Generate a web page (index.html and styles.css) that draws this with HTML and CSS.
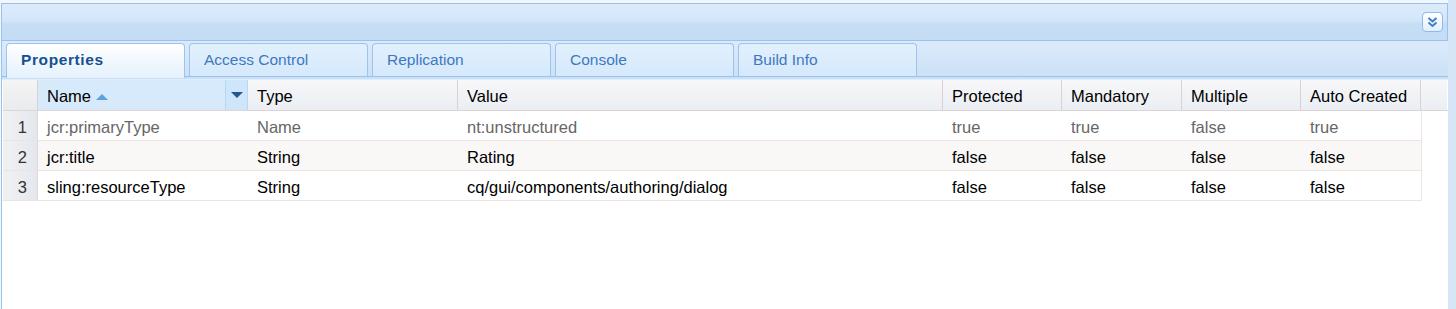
FILE: index.html
```html
<!DOCTYPE html>
<html lang="en">
<head>
  <meta charset="UTF-8">
  <title>CRXDE Lite - Properties</title>
  <link rel="stylesheet" href="styles.css">
</head>
<body>

<div class="app">
  <div class="panel">
    <div class="panel-header">
      <button class="collapse-btn" title="Collapse">
        <svg width="13" height="12" viewBox="0 0 13 12">
          <path d="M2.5 2 L6.5 5.5 L10.5 2" fill="none" stroke="#3b7fc6" stroke-width="2"/>
          <path d="M2.5 6.5 L6.5 10 L10.5 6.5" fill="none" stroke="#3b7fc6" stroke-width="2"/>
        </svg>
      </button>
    </div>

    <div class="tab-strip">
      <div class="tab active">Properties</div>
      <div class="tab">Access Control</div>
      <div class="tab">Replication</div>
      <div class="tab">Console</div>
      <div class="tab">Build Info</div>
    </div>

    <div class="grid">
      <div class="grid-head">
        <div class="hcell numberer"></div>
        <div class="hcell sorted">
          <span>Name</span>
          <span class="sort-arrow"></span>
          <span class="trigger"><span class="trigger-arrow"></span></span>
        </div>
        <div class="hcell">Type</div>
        <div class="hcell">Value</div>
        <div class="hcell">Protected</div>
        <div class="hcell">Mandatory</div>
        <div class="hcell">Multiple</div>
        <div class="hcell">Auto Created</div>
        <div class="hcell filler"></div>
      </div>

      <div class="grid-row readonly">
        <div class="cell numberer">1</div>
        <div class="cell">jcr:primaryType</div>
        <div class="cell">Name</div>
        <div class="cell">nt:unstructured</div>
        <div class="cell">true</div>
        <div class="cell">true</div>
        <div class="cell">false</div>
        <div class="cell">true</div>
      </div>

      <div class="grid-row alt">
        <div class="cell numberer">2</div>
        <div class="cell">jcr:title</div>
        <div class="cell">String</div>
        <div class="cell">Rating</div>
        <div class="cell">false</div>
        <div class="cell">false</div>
        <div class="cell">false</div>
        <div class="cell">false</div>
      </div>

      <div class="grid-row">
        <div class="cell numberer">3</div>
        <div class="cell">sling:resourceType</div>
        <div class="cell">String</div>
        <div class="cell">cq/gui/components/authoring/dialog</div>
        <div class="cell">false</div>
        <div class="cell">false</div>
        <div class="cell">false</div>
        <div class="cell">false</div>
      </div>
    </div>
  </div>
  <div class="side-strip"></div>
</div>

</body>
</html>
```

FILE: styles.css
```css
* {
  margin: 0;
  padding: 0;
  box-sizing: border-box;
}

html, body {
  height: 100%;
  background: #ffffff;
  font-family: "Liberation Sans", Arial, sans-serif;
  font-size: 16.5px;
  color: #000;
  overflow: hidden;
}

.app {
  display: flex;
  height: 309px;
  background: #f2f7fd;
}

.panel {
  flex: 1;
  margin-top: 3px;
  margin-left: 1px;
  background: #ffffff;
  border-left: 1px solid #99c3ee;
}

.side-strip {
  width: 8px;
  background: #d6e6f6;
}

/* panel title bar */
.panel-header {
  height: 38px;
  border-top: 1px solid #99c3ee;
  border-bottom: 1px solid #99c3ee;
  border-right: 1px solid #99c3ee;
  background: linear-gradient(to bottom, #dcebfb 0%, #d4e7f9 45%, #c5def5 55%, #c4ddf5 100%);
  display: flex;
  align-items: center;
  justify-content: flex-end;
  padding-right: 4px;
}

.collapse-btn {
  width: 21px;
  height: 20px;
  border: 1px solid #8dbbea;
  border-radius: 4px;
  background: linear-gradient(to bottom, #ffffff, #e3effc);
  display: flex;
  align-items: center;
  justify-content: center;
  cursor: pointer;
}

/* tabs */
.tab-strip {
  height: 39px;
  display: flex;
  align-items: flex-end;
  gap: 4px;
  padding: 0 0 2px 4px;
  background: linear-gradient(to bottom, #dcebfb, #c9e0f6);
  border-bottom: 1px solid #e3eefa;
  position: relative;
}

.tab-strip::after {
  content: "";
  position: absolute;
  left: 0;
  right: 0;
  bottom: 2px;
  height: 1px;
  background: #99c3ee;
}

.tab {
  width: 179px;
  height: 34px;
  border: 1px solid #9cc5ee;
  border-bottom: none;
  border-radius: 4px 4px 0 0;
  background: linear-gradient(to bottom, #e2f0fd, #d4e9fc);
  color: #3f78bd;
  font-size: 15.5px;
  padding: 7px 0 0 14px;
  cursor: pointer;
}

.tab.active {
  background: linear-gradient(to bottom, #ffffff, #e4f1fd);
  color: #16508e;
  font-weight: bold;
  letter-spacing: 0.6px;
  position: relative;
  z-index: 1;
  height: 35px;
  margin-bottom: -1px;
}

/* property grid */
.grid {
  padding-left: 1px;
}

.grid-head,
.grid-row {
  display: grid;
  grid-template-columns: 35px 210px 210px 485px 119px 120px 119px 120px;
}

.grid-head {
  grid-template-columns: 35px 210px 210px 485px 119px 120px 119px 120px 26px;
  height: 31px;
  border-bottom: 1px solid #ddd5d5;
}

.hcell {
  background: linear-gradient(to bottom, #f7f7f9, #eaeef3);
  border-right: 1px solid #ddd0d0;
  padding: 7px 0 0 9px;
  white-space: nowrap;
}

.hcell.numberer {
  background: linear-gradient(to bottom, #f4f4f4, #e9ebee);
}

.hcell.filler {
  border-right: none;
}

.hcell.sorted {
  background: #d7eafb;
  border-right: 1px solid #b6d8f6;
  position: relative;
  display: flex;
  align-items: flex-start;
}

.sort-arrow {
  width: 0;
  height: 0;
  margin: 7px 0 0 5px;
  border-left: 6px solid transparent;
  border-right: 6px solid transparent;
  border-bottom: 6px solid #5ea2dd;
}

.trigger {
  position: absolute;
  right: 0;
  top: 0;
  width: 22px;
  height: 30px;
  background: #cfe5f9;
  border-left: 1px solid #b6d8f6;
}

.trigger-arrow {
  position: absolute;
  left: 5px;
  top: 12px;
  border-left: 6px solid transparent;
  border-right: 6px solid transparent;
  border-top: 6px solid #23588e;
}

.grid-row {
  height: 30px;
  border-bottom: 1px solid #ede3e3;
  width: 1419px;
  border-right: 1px solid #ede3e3;
}

.grid-row:first-of-type {
  margin-top: 1px;
}

.grid-row.alt {
  background: #faf7f7;
}

.cell {
  padding: 7px 0 0 9px;
  white-space: nowrap;
  overflow: hidden;
}

.cell.numberer {
  background: linear-gradient(to right, #f0f1f3, #e4e8ed);
  border-right: 1px solid #e0d5d8;
  text-align: right;
  padding: 7px 10px 0 0;
  color: #333;
}

.grid-row.readonly .cell {
  color: #666666;
}

.grid-row.readonly .cell.numberer {
  color: #333;
}
```
